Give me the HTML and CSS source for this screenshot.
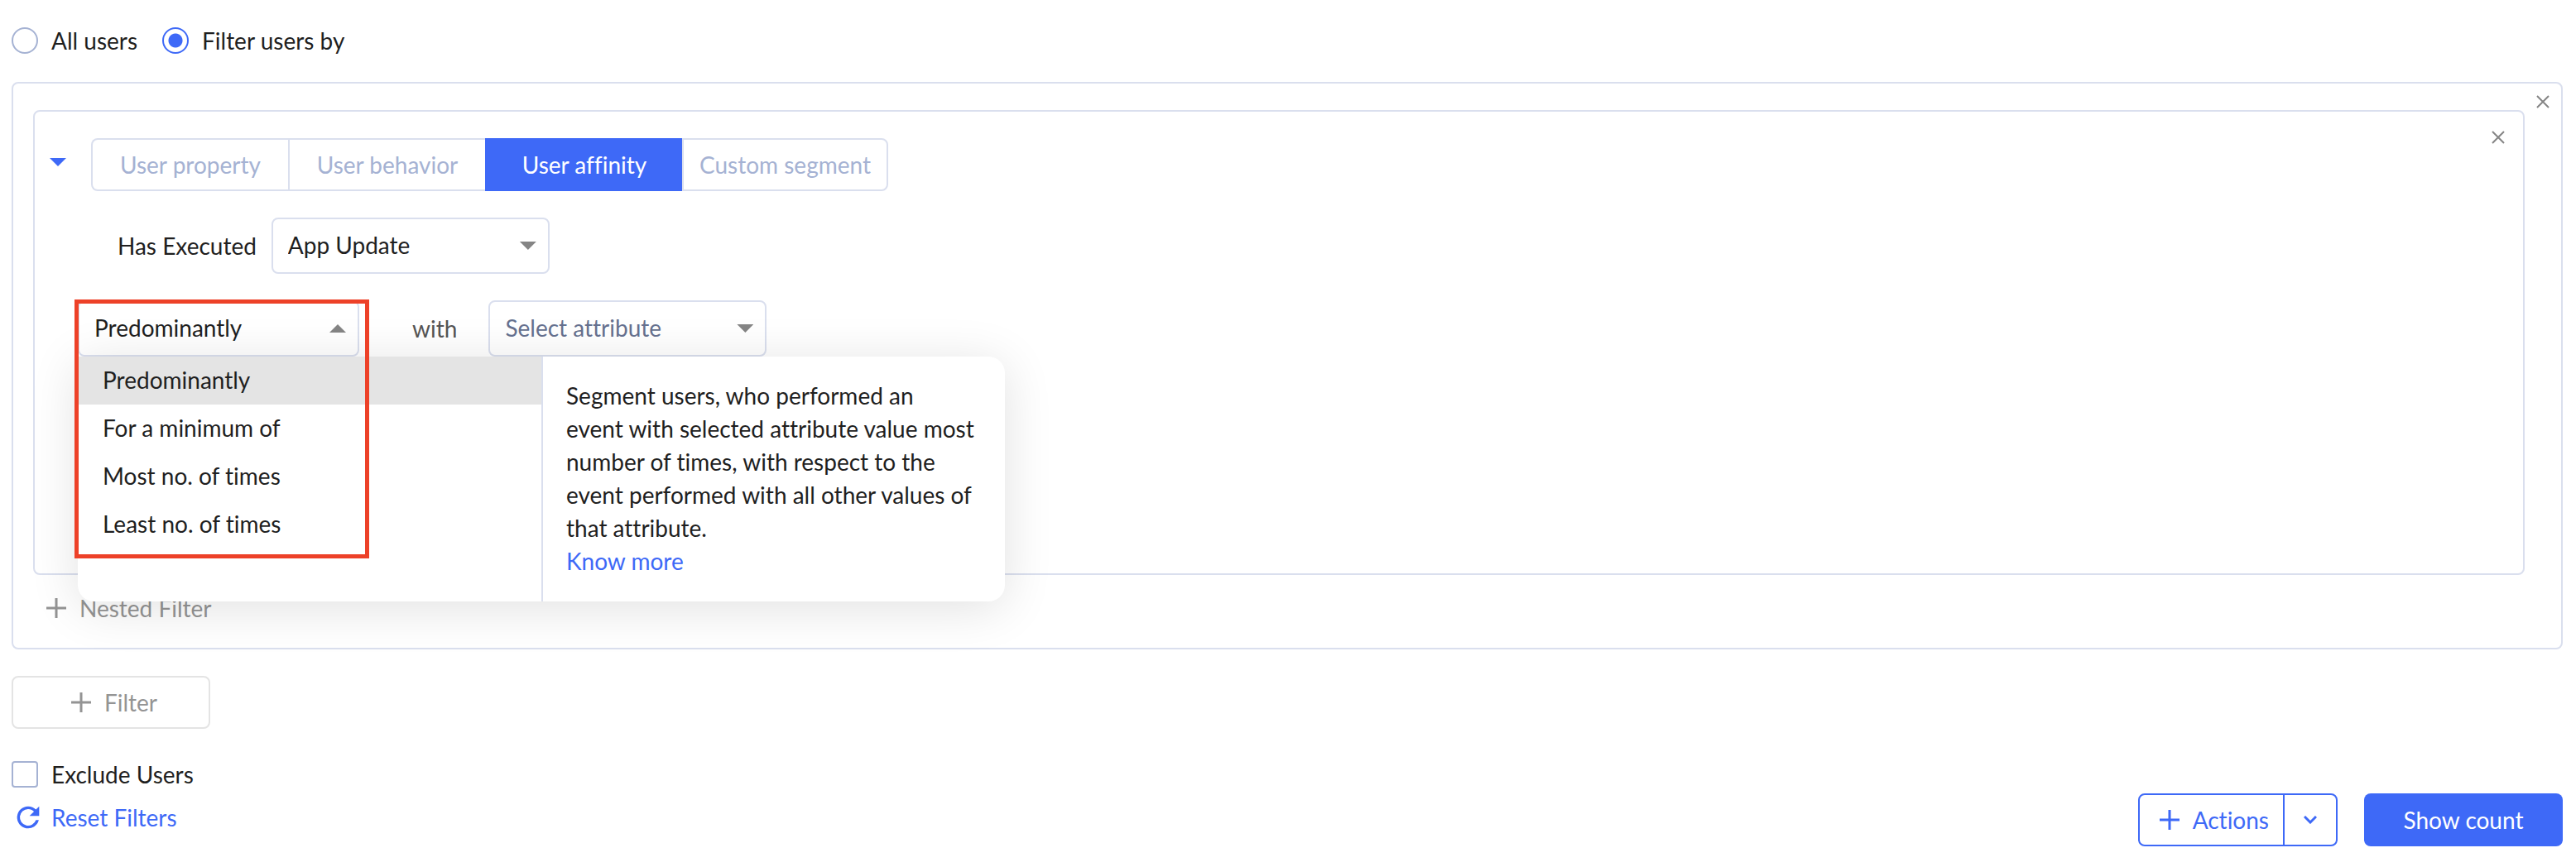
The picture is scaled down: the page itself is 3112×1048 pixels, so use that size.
FILE: index.html
```
<!DOCTYPE html>
<html lang="en">
<head>
<meta charset="utf-8">
<meta name="viewport" content="width=device-width, initial-scale=1">
<title>User filters</title>
<link rel="stylesheet" href="styles.css">
</head>
<body>
<main class="page">
  <div class="scope" role="radiogroup" aria-label="Audience">
    <label class="choice"><input class="radio" type="radio" name="scope">All users</label>
    <label class="choice"><input class="radio" type="radio" name="scope" checked>Filter users by</label>
  </div>

  <section class="group">
    <div class="group-body">
      <div class="filter">
        <div class="filter-body">
          <div class="filter-head">
            <button class="toggle" type="button" aria-label="Collapse filter"><span class="caret caret-blue"></span></button>
            <div class="tabs">
              <button class="tab" type="button">User property</button>
              <button class="tab" type="button">User behavior</button>
              <button class="tab tab-active" type="button">User affinity</button>
              <button class="tab tab-wide" type="button">Custom segment</button>
            </div>
          </div>

          <div class="row row-event">
            <label for="event">Has Executed</label>
            <div class="field">
              <select class="select" id="event"><option>App Update</option></select>
              <span class="caret"></span>
            </div>
          </div>

          <div class="row row-affinity">
            <div class="field field-open">
              <select class="select" id="affinity" aria-label="Affinity type"><option>Predominantly</option></select>
              <span class="caret caret-up"></span>
              <div class="menu">
                <ul class="options" role="listbox" aria-label="Affinity types">
                  <li class="option option-selected" role="option" aria-selected="true">Predominantly</li>
                  <li class="option" role="option">For a minimum of</li>
                  <li class="option" role="option">Most no. of times</li>
                  <li class="option" role="option">Least no. of times</li>
                </ul>
                <div class="hint">
                  <p class="hint-text">Segment users, who performed an<br>event with selected attribute value most number of times, with respect to the event performed with all other values of that attribute.</p>
                  <a class="link" href="#">Know more</a>
                </div>
              </div>
              <div class="highlight"></div>
            </div>
            <label class="with" for="attribute">with</label>
            <div class="field">
              <select class="select select-empty" id="attribute"><option>Select attribute</option></select>
              <span class="caret"></span>
            </div>
          </div>
        </div>
        <button class="close close-filter" type="button" aria-label="Remove filter">
          <svg width="16" height="16" viewBox="0 0 16 16"><path d="M1 1l14 14M15 1L1 15"/></svg>
        </button>
      </div>

      <button class="add add-nested" type="button">
        <svg width="24" height="24" viewBox="0 0 24 24"><path d="M12 0v24M0 12h24"/></svg>Nested Filter
      </button>
    </div>
    <button class="close close-group" type="button" aria-label="Remove group">
      <svg width="16" height="16" viewBox="0 0 16 16"><path d="M1 1l14 14M15 1L1 15"/></svg>
    </button>
  </section>

  <button class="add add-filter" type="button">
    <svg width="24" height="24" viewBox="0 0 24 24"><path d="M12 0v24M0 12h24"/></svg>Filter
  </button>

  <footer class="footer">
    <div class="footer-options">
      <label class="choice"><input class="checkbox" type="checkbox">Exclude Users</label>
      <a class="reset link" href="#">
        <svg width="40" height="40" viewBox="0 0 24 24"><path d="M17.65 6.35A7.96 7.96 0 0 0 12 4a8 8 0 1 0 7.73 10h-2.08A6 6 0 1 1 12 6c1.66 0 3.14.69 4.22 1.78L13 11h7V4z"/></svg>Reset Filters
      </a>
    </div>
    <div class="footer-buttons">
      <div class="split">
        <button class="split-main" type="button">
          <svg width="24" height="24" viewBox="0 0 24 24"><path d="M12 0v24M0 12h24"/></svg>Actions
        </button>
        <button class="split-more" type="button" aria-label="More actions">
          <svg width="16" height="10" viewBox="0 0 16 10"><path d="M1 1l7 7 7-7"/></svg>
        </button>
      </div>
      <button class="primary" type="button">Show count</button>
    </div>
  </footer>
</main>
</body>
</html>
```
FILE: styles.css
```
* {
  box-sizing: border-box;
}

body {
  margin: 0;
  background: #fff;
  color: #1f1f1f;
  font-family: Lato, "Liberation Sans", sans-serif;
  font-size: 28px;
  font-variant-ligatures: none;
  line-height: 40px;
}

button,
select {
  margin: 0;
  padding: 0;
  border: 0;
  background: none;
  color: inherit;
  font: inherit;
  font-variant-ligatures: none;
}

svg {
  display: block;
  flex: none;
  fill: none;
  stroke: currentColor;
}

.page {
  padding: 33px 16px 24px 14px;
}

.scope {
  display: flex;
  gap: 30px;
  margin-bottom: 34px;
}

.choice {
  display: flex;
  align-items: center;
  gap: 16px;
  line-height: 32px;
}

.radio,
.checkbox {
  appearance: none;
  width: 32px;
  height: 32px;
  margin: 0;
  border: 2px solid #a5b2d3;
  background: #fff;
}

.radio {
  border-radius: 50%;
}

.radio:checked {
  border-color: #3e69f7;
  background: radial-gradient(circle, #3e69f7 8px, #fff 9px);
}

.checkbox {
  border-radius: 4px;
}

/* Filter group */
.group {
  display: flex;
  align-items: flex-start;
  border: 2px solid #dadfee;
  border-radius: 8px;
}

.group-body {
  flex: 1;
  padding: 32px 0 28px 24px;
}

.filter {
  display: flex;
  align-items: flex-start;
  border: 2px solid #dadfee;
  border-radius: 8px;
}

.filter-body {
  flex: 1;
  display: flex;
  flex-direction: column;
  gap: 32px;
  padding: 32px 0 262px;
}

.filter-head {
  display: flex;
}

.toggle {
  display: flex;
  justify-content: center;
  width: 68px;
  padding: 24px 12px 0 0;
}

.close {
  display: grid;
  place-items: center;
  color: #858585;
  stroke-width: 2px;
}

.close-group {
  width: 44px;
  height: 44px;
}

.close-filter {
  width: 60px;
  height: 62px;
}

.caret {
  width: 20px;
  height: 10px;
  background: #858585;
  clip-path: polygon(0 0, 100% 0, 50% 100%);
}

.caret-up {
  clip-path: polygon(50% 0, 100% 100%, 0 100%);
}

.caret-blue {
  background: #3e69f7;
}

.tabs {
  display: flex;
}

.tab {
  width: 238px;
  height: 64px;
  border: 2px solid #dadfee;
  border-right-width: 0;
  color: #a5b2d3;
}

.tab:first-child {
  border-radius: 8px 0 0 8px;
}

.tab-wide {
  width: 249px;
  border-right-width: 2px;
  border-radius: 0 8px 8px 0;
}

.tab-active {
  border-color: #3e69f7;
  background: #3e69f7;
  color: #fff;
}

.row {
  display: flex;
  align-items: center;
}

.row-event {
  gap: 18px;
  padding-left: 100px;
}

.row-affinity {
  padding-left: 52px;
}

.with {
  margin: 0 38px 0 64px;
  color: #555;
}

.field {
  position: relative;
  display: grid;
  align-items: center;
  width: 336px;
}

.field-open {
  width: 340px;
}

.select,
.field > .caret {
  grid-area: 1 / 1;
}

.field > .caret {
  justify-self: end;
  margin-right: 16px;
  pointer-events: none;
}

.select {
  appearance: none;
  width: 100%;
  height: 68px;
  padding: 0 48px 2px 18px;
  border: 2px solid #dadfee;
  border-radius: 8px;
}

.select-empty {
  color: #66718f;
}

/* Open menu, shown over the rest of the form */
.menu {
  position: absolute;
  z-index: 1;
  top: 100%;
  left: 0;
  display: flex;
  width: 1120px;
  border-radius: 0 20px 20px 20px;
  background: #fff;
  box-shadow: 0 8px 60px rgba(0, 0, 0, 0.12);
}

.options {
  flex: 1;
  margin: 0;
  padding: 0;
  list-style: none;
}

.option {
  padding: 8px 30px 10px;
}

.option-selected {
  background: #e4e4e4;
}

.hint {
  width: 560px;
  padding: 27px 28px 29px;
  border-left: 2px solid #dadfee;
}

.hint-text {
  margin: 0;
}

.highlight {
  position: absolute;
  z-index: 2;
  top: -1px;
  left: -4px;
  width: 356px;
  height: 313px;
  border: 5px solid #ed4128;
  pointer-events: none;
}

.link {
  color: #3e69f7;
  text-decoration: none;
}

.add {
  display: flex;
  align-items: center;
  gap: 16px;
  color: #949494;
  stroke-width: 3px;
}

.add-nested {
  margin-top: 20px;
  padding-left: 16px;
}

.add-filter {
  justify-content: center;
  width: 240px;
  height: 64px;
  margin-top: 32px;
  padding-left: 8px;
  border: 2px solid #e4e4e4;
  border-radius: 8px;
}

/* Footer */
.footer {
  display: flex;
  align-items: flex-end;
  justify-content: space-between;
  margin-top: 39px;
}

.footer-options {
  display: flex;
  flex-direction: column;
  gap: 16px;
  padding-bottom: 15px;
}

.reset {
  display: flex;
  align-items: center;
  gap: 8px;
}

.reset svg {
  fill: currentColor;
  stroke: none;
}

.footer-buttons {
  display: flex;
  gap: 32px;
}

.split {
  display: flex;
  height: 64px;
  border: 2px solid #3e69f7;
  border-radius: 8px;
  color: #3e69f7;
}

.split-main {
  display: flex;
  align-items: center;
  gap: 16px;
  padding: 0 17px 0 24px;
  stroke-width: 3px;
}

.split-more {
  display: grid;
  place-items: center;
  width: 64px;
  border-left: 2px solid #3e69f7;
  stroke-width: 3px;
}

.primary {
  width: 240px;
  height: 64px;
  border-radius: 8px;
  background: #3e69f7;
  color: #fff;
}
```
